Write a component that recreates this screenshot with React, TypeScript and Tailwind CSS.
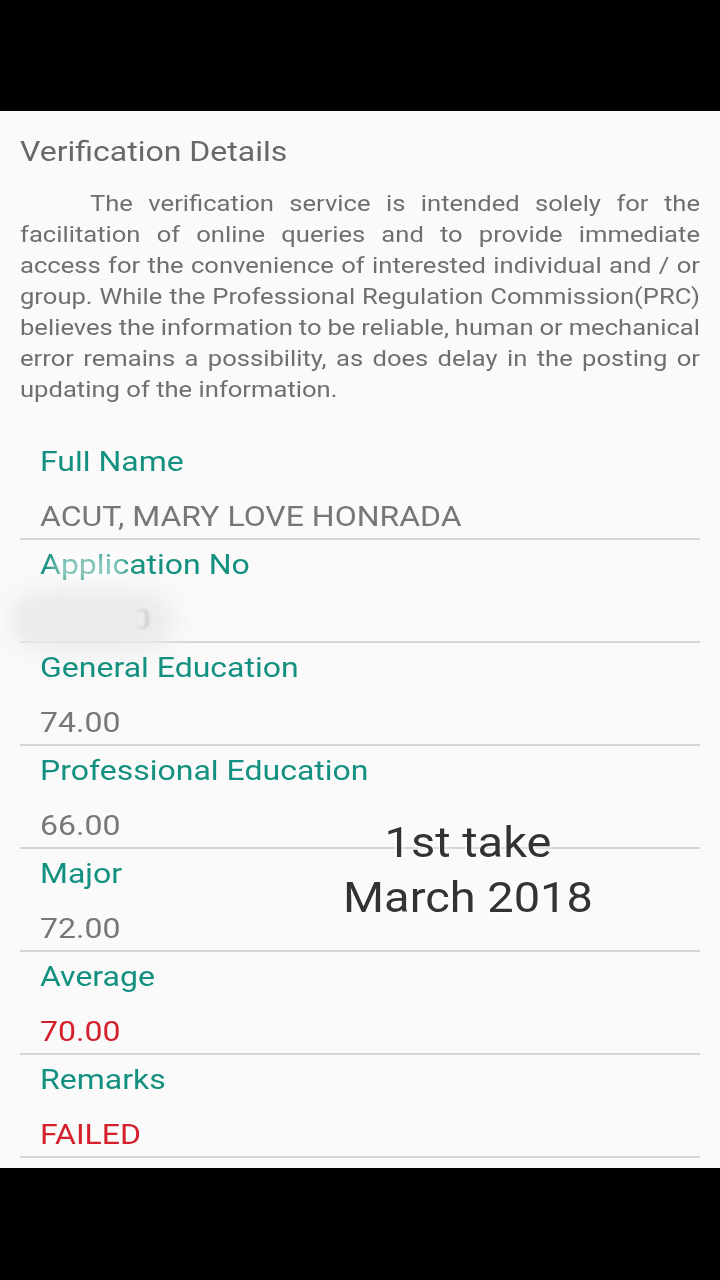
import React from 'react';

interface Field {
  label: string;
  value: string;
  danger?: boolean;
  hidden?: boolean;
}

const fields: Field[] = [
  { label: 'Full Name', value: 'ACUT, MARY LOVE HONRADA' },
  { label: 'Application No', value: '0', hidden: true },
  { label: 'General Education', value: '74.00' },
  { label: 'Professional Education', value: '66.00' },
  { label: 'Major', value: '72.00' },
  { label: 'Average', value: '70.00', danger: true },
  { label: 'Remarks', value: 'FAILED', danger: true },
];

// lines broken as on the phone screen
const disclaimer = [
  'The verification service is intended solely for the',
  'facilitation of online queries and to provide immediate',
  'access for the convenience of interested individual and / or',
  'group. While the Professional Regulation Commission(PRC)',
  'believes the information to be reliable, human or mechanical',
  'error remains a possibility, as does delay in the posting or',
  'updating of the information.',
];

const FieldRow: React.FC<{ field: Field }> = ({ field }) => (
  <div className="flex flex-col border-b-2 border-[#d6d6d6]">
    <div className="relative h-[48px] px-[20px] text-[32px] leading-[48px] text-[#13907f]">
      <span className="inline-block scale-y-[0.88]">{field.label}</span>
      {field.hidden && (
        <div className="absolute left-[34px] top-[14px] h-[26px] w-[70px] bg-white/50 blur-[6px]" />
      )}
    </div>
    <div className="relative mt-[9px] h-[44px] px-[20px] text-[32px] leading-[44px]">
      {field.hidden ? (
        <>
          <div className="absolute -left-[10px] -top-[6px] h-[60px] w-[165px] rounded-full bg-[#ebebeb] blur-[12px]" />
          <span className="relative ml-[92px] inline-block scale-y-[0.88] text-[#a5a5a5] blur-[1.5px]">0</span>
          <div className="absolute left-0 top-[4px] h-[36px] w-[128px] rounded-full bg-[#ececec] blur-[6px]" />
        </>
      ) : (
        <span className={`inline-block scale-y-[0.88] ${field.danger ? 'text-[#d4202c]' : 'text-[#777777]'}`}>
          {field.value}
        </span>
      )}
    </div>
  </div>
);

export default function App() {
  return (
    <div
      className="flex min-h-[1280px] w-[720px] flex-col bg-black"
      style={{ fontFamily: 'Roboto, "Noto Sans", sans-serif' }}
    >
      <div className="h-[111px]" />
      <div className="relative flex h-[1057px] flex-col bg-[#fafafa] px-[20px] pt-[20px]">
        <h1 className="text-[32px] leading-[40px] font-normal text-[#686868]">
          <span className="inline-block scale-y-[0.88]">Verification Details</span>
        </h1>
        <div className="mt-[17px] text-[25.6px] leading-[31px] text-[#6f6f6f]">
          {disclaimer.map((line, i) => (
            <div
              key={i}
              className={`scale-y-[0.88] whitespace-nowrap ${i === 0 ? 'pl-[70px]' : ''} ${
                i === 4 ? '[word-spacing:-3px]' : ''
              } ${i < disclaimer.length - 1 ? 'text-justify [text-align-last:justify]' : ''}`}
            >
              {line}
            </div>
          ))}
        </div>

        <div className="mt-[32px] flex flex-col">
          {fields.map((f) => (
            <FieldRow key={f.label} field={f} />
          ))}
        </div>

        <div className="pointer-events-none absolute left-[248px] top-[704px] w-[440px] text-center text-[47px] leading-[55px] text-[#333333] [text-shadow:0_0_3px_#ffffff,0_0_6px_#ffffff]">
          <div className="scale-y-[0.9]">1st take</div>
          <div className="scale-y-[0.9]">March 2018</div>
        </div>
      </div>
      <div className="flex-1" />
    </div>
  );
}
